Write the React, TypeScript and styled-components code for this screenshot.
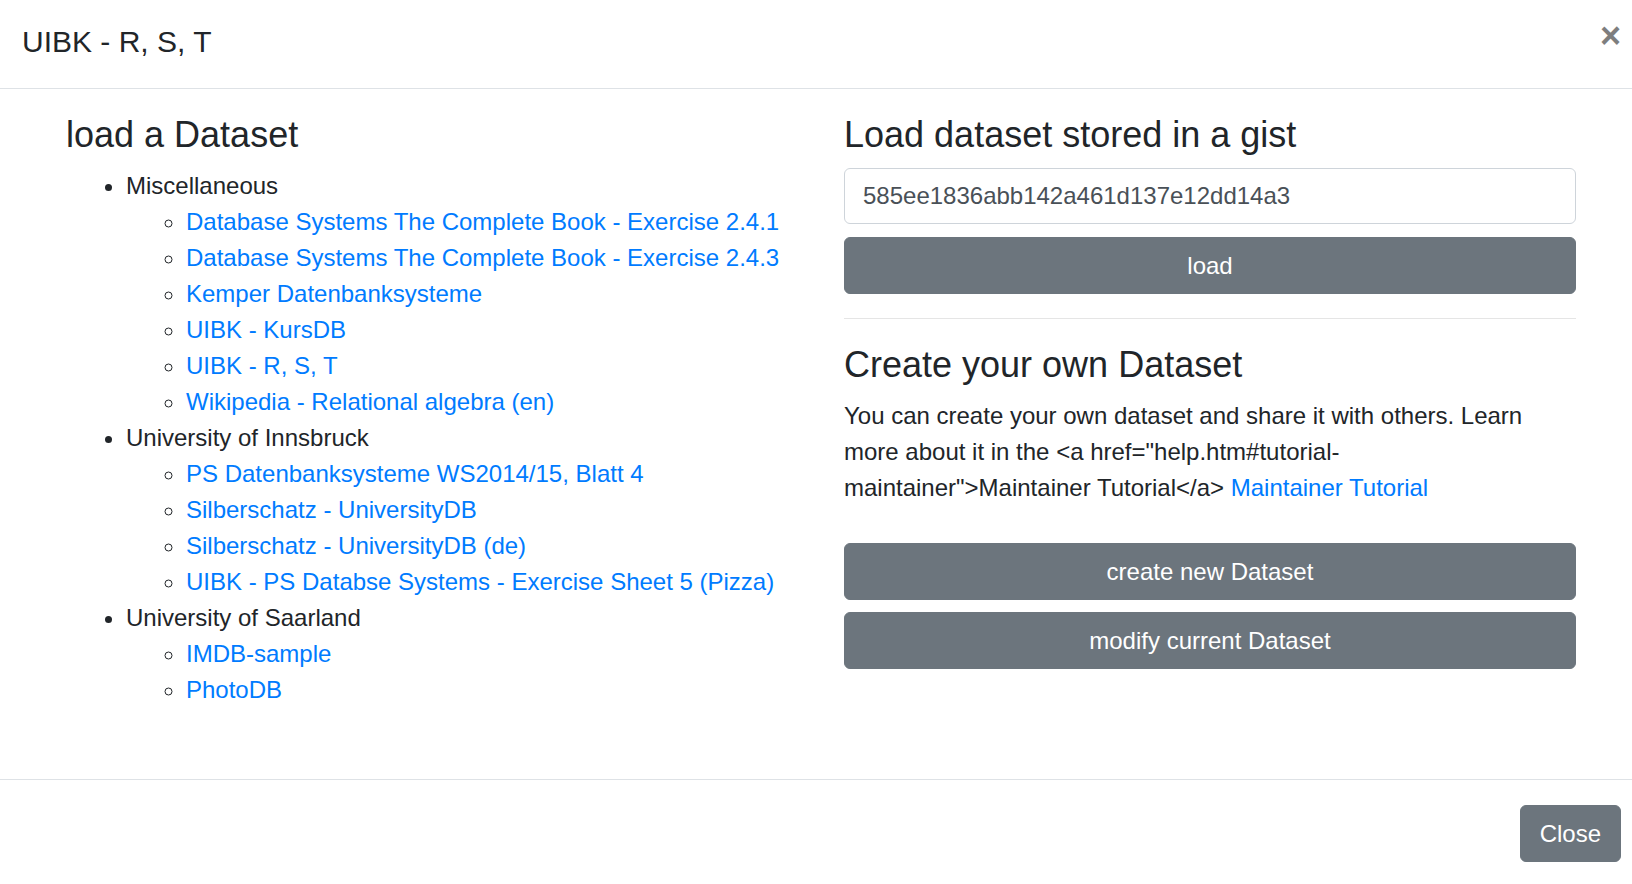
import React from "react";
import styled, { createGlobalStyle } from "styled-components";

const GlobalStyle = createGlobalStyle`
  * { box-sizing: border-box; }
  html, body { margin: 0; padding: 0; background: #ffffff; }
  body {
    font-family: "Liberation Sans", Arial, Helvetica, sans-serif;
    color: #212529;
    font-size: 24px;
    line-height: 36px;
  }
`;

const Modal = styled.div`
  width: 1632px;
  height: 884px;
  overflow: hidden;
  display: flex;
  flex-direction: column;
  background: #fff;
`;

const Header = styled.div`
  display: flex;
  justify-content: space-between;
  align-items: flex-start;
  padding: 19px 11px 24px 22px;
  border-bottom: 1px solid #dee2e6;
`;

const Title = styled.h5`
  margin: 0;
  font-size: 30px;
  line-height: 45px;
  font-weight: 400;
  color: #212529;
`;

const CloseX = styled.button`
  border: 0;
  background: transparent;
  padding: 0;
  margin: -1px 0 0 0;
  width: 21px;
  font-family: "Liberation Sans", Arial, sans-serif;
  font-size: 36px;
  line-height: 36px;
  font-weight: 700;
  color: #000;
  opacity: 0.5;
  cursor: pointer;
`;

const Body = styled.div`
  flex: 1;
  display: grid;
  grid-template-columns: 732px 732px;
  column-gap: 46px;
  padding: 24px 56px 0 66px;
  align-items: start;
`;

const Column = styled.div`
  display: flex;
  flex-direction: column;
`;

const Heading = styled.h3`
  margin: 0 0 12px 0;
  font-size: 36px;
  line-height: 43px;
  font-weight: 400;
  color: #212529;
`;

const List = styled.ul<{ $nested?: boolean }>`
  margin: 0;
  padding-left: 60px;
  list-style-type: ${(p) => (p.$nested ? "circle" : "disc")};
`;

const Item = styled.li`
  font-size: 24px;
  line-height: 36px;
  color: #212529;
`;

const Link = styled.a`
  color: #007bff;
  text-decoration: none;
  cursor: pointer;
`;

const Input = styled.input`
  display: block;
  width: 100%;
  height: 56px;
  padding: 0 18px;
  margin: 0 0 13px 0;
  font-family: "Liberation Sans", Arial, sans-serif;
  font-size: 24px;
  color: #495057;
  background: #fff;
  border: 1px solid #ced4da;
  border-radius: 6px;
  outline: none;
`;

const Button = styled.button<{ $block?: boolean }>`
  display: ${(p) => (p.$block ? "flex" : "inline-flex")};
  width: ${(p) => (p.$block ? "100%" : "auto")};
  height: 57px;
  align-items: center;
  justify-content: center;
  padding: 0 19px;
  font-family: "Liberation Sans", Arial, sans-serif;
  font-size: 24px;
  line-height: 36px;
  color: #fff;
  background: #6c757d;
  border: 1px solid #6c757d;
  border-radius: 6px;
  cursor: pointer;
`;

const ButtonStack = styled.div`
  display: flex;
  flex-direction: column;
  gap: 12px;
`;

const Rule = styled.hr`
  margin: 24px 0;
  border: 0;
  border-top: 1px solid rgba(0, 0, 0, 0.1);
`;

const Paragraph = styled.p`
  margin: 0 0 37px 0;
  font-size: 24px;
  line-height: 36px;
  color: #212529;
`;

const Footer = styled.div`
  display: flex;
  justify-content: flex-end;
  padding: 25px 11px 22px 24px;
  border-top: 1px solid #dee2e6;
`;

const groups: { name: string; items: string[] }[] = [
  {
    name: "Miscellaneous",
    items: [
      "Database Systems The Complete Book - Exercise 2.4.1",
      "Database Systems The Complete Book - Exercise 2.4.3",
      "Kemper Datenbanksysteme",
      "UIBK - KursDB",
      "UIBK - R, S, T",
      "Wikipedia - Relational algebra (en)",
    ],
  },
  {
    name: "University of Innsbruck",
    items: [
      "PS Datenbanksysteme WS2014/15, Blatt 4",
      "Silberschatz - UniversityDB",
      "Silberschatz - UniversityDB (de)",
      "UIBK - PS Databse Systems - Exercise Sheet 5 (Pizza)",
    ],
  },
  {
    name: "University of Saarland",
    items: ["IMDB-sample", "PhotoDB"],
  },
];

export default function App() {
  return (
    <>
      <GlobalStyle />
      <Modal>
        <Header>
          <Title>UIBK - R, S, T</Title>
          <CloseX aria-label="Close">×</CloseX>
        </Header>
        <Body>
          <Column>
            <Heading>load a Dataset</Heading>
            <List>
              {groups.map((g) => (
                <Item key={g.name}>
                  {g.name}
                  <List $nested>
                    {g.items.map((it) => (
                      <Item key={it}>
                        <Link>{it}</Link>
                      </Item>
                    ))}
                  </List>
                </Item>
              ))}
            </List>
          </Column>
          <Column>
            <Heading>Load dataset stored in a gist</Heading>
            <Input defaultValue="585ee1836abb142a461d137e12dd14a3" />
            <Button $block>load</Button>
            <Rule />
            <Heading>Create your own Dataset</Heading>
            <Paragraph>
              You can create your own dataset and share it with others. Learn more about it in the{" "}
              {'<a href="help.htm#tutorial-maintainer">Maintainer Tutorial</a>'}{" "}
              <Link>Maintainer Tutorial</Link>
            </Paragraph>
            <ButtonStack>
              <Button $block>create new Dataset</Button>
              <Button $block>modify current Dataset</Button>
            </ButtonStack>
          </Column>
        </Body>
        <Footer>
          <Button>Close</Button>
        </Footer>
      </Modal>
    </>
  );
}
